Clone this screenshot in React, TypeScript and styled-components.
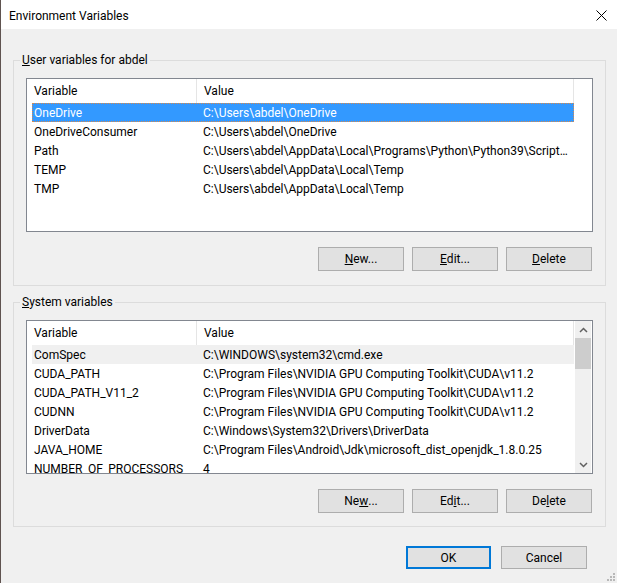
import styled, { createGlobalStyle } from "styled-components";

const GlobalStyle = createGlobalStyle`
  html, body {
    margin: 0;
    padding: 0;
    background: #f0f0f0;
  }
  body {
    font-family: Roboto, "Liberation Sans", Arial, sans-serif;
    font-size: 12px;
    color: #000;
  }
  * {
    box-sizing: border-box;
  }
`;

type Variable = { name: string; value: string };
type RowState = "none" | "focused" | "inactive";

const userVars: Variable[] = [
  { name: "OneDrive", value: "C:\\Users\\abdel\\OneDrive" },
  { name: "OneDriveConsumer", value: "C:\\Users\\abdel\\OneDrive" },
  {
    name: "Path",
    value:
      "C:\\Users\\abdel\\AppData\\Local\\Programs\\Python\\Python39\\Scripts\\;C:\\Users\\abdel\\AppData\\Local\\Programs\\Python\\Python39\\",
  },
  { name: "TEMP", value: "C:\\Users\\abdel\\AppData\\Local\\Temp" },
  { name: "TMP", value: "C:\\Users\\abdel\\AppData\\Local\\Temp" },
];

const systemVars: Variable[] = [
  { name: "ComSpec", value: "C:\\WINDOWS\\system32\\cmd.exe" },
  { name: "CUDA_PATH", value: "C:\\Program Files\\NVIDIA GPU Computing Toolkit\\CUDA\\v11.2" },
  { name: "CUDA_PATH_V11_2", value: "C:\\Program Files\\NVIDIA GPU Computing Toolkit\\CUDA\\v11.2" },
  { name: "CUDNN", value: "C:\\Program Files\\NVIDIA GPU Computing Toolkit\\CUDA\\v11.2" },
  { name: "DriverData", value: "C:\\Windows\\System32\\Drivers\\DriverData" },
  { name: "JAVA_HOME", value: "C:\\Program Files\\Android\\Jdk\\microsoft_dist_openjdk_1.8.0.25" },
  { name: "NUMBER_OF_PROCESSORS", value: "4" },
];

const VariableList = ({
  items,
  selected,
  state,
  scrollable,
}: {
  items: Variable[];
  selected: number;
  state: RowState;
  scrollable?: boolean;
}) => (
  <ListBox>
    <ListMain>
      <HeaderRow>
        <HeaderCell $width={170}>Variable</HeaderCell>
        <HeaderCell $width={377}>Value</HeaderCell>
      </HeaderRow>
      <Rows>
        {items.map((v, i) => (
          <Row key={v.name} $state={i === selected ? state : "none"}>
            <NameCell>{v.name}</NameCell>
            <ValueCell>{v.value}</ValueCell>
          </Row>
        ))}
      </Rows>
    </ListMain>
    {scrollable && (
      <ScrollBar>
        <ScrollArrow>
          <svg width="9" height="6" viewBox="0 0 9 6">
            <path d="M1 5 L4.5 1.5 L8 5" fill="none" stroke="#606060" strokeWidth="1.5" />
          </svg>
        </ScrollArrow>
        <Thumb />
        <Track />
        <ScrollArrow>
          <svg width="9" height="6" viewBox="0 0 9 6">
            <path d="M1 1 L4.5 4.5 L8 1" fill="none" stroke="#606060" strokeWidth="1.5" />
          </svg>
        </ScrollArrow>
      </ScrollBar>
    )}
  </ListBox>
);

const App = () => {
  return (
    <>
      <GlobalStyle />
      <Window>
        <TitleBar>
          <Title>Environment Variables</Title>
          <CloseButton>
            <svg width="11" height="11" viewBox="0 0 11 11">
              <path d="M0.5 0.5 L10.5 10.5 M10.5 0.5 L0.5 10.5" stroke="#000" strokeWidth="1" />
            </svg>
          </CloseButton>
        </TitleBar>
        <Body>
          <Group>
            <Legend>
              <Key>U</Key>ser variables for abdel
            </Legend>
            <GroupBody>
              <VariableList items={userVars} selected={0} state="focused" />
              <ButtonRow>
                <PushButton>
                  <Key>N</Key>ew...
                </PushButton>
                <PushButton>
                  <Key>E</Key>dit...
                </PushButton>
                <PushButton>
                  <Key>D</Key>elete
                </PushButton>
              </ButtonRow>
            </GroupBody>
          </Group>
          <Group $gap={8}>
            <Legend>
              <Key>S</Key>ystem variables
            </Legend>
            <GroupBody $bottom={13}>
              <VariableList items={systemVars} selected={0} state="inactive" scrollable />
              <ButtonRow>
                <PushButton>
                  Ne<Key>w</Key>...
                </PushButton>
                <PushButton>
                  Ed<Key>i</Key>t...
                </PushButton>
                <PushButton>
                  De<Key>l</Key>ete
                </PushButton>
              </ButtonRow>
            </GroupBody>
          </Group>
          <Footer>
            <PushButton $width={85} $height={23} $default>
              OK
            </PushButton>
            <PushButton $height={23}>Cancel</PushButton>
          </Footer>
        </Body>
        <Grip>
          <svg width="10" height="10" viewBox="0 0 10 10">
            <rect x="7" y="1" width="2" height="2" fill="#b8b8b8" />
            <rect x="4" y="4" width="2" height="2" fill="#b8b8b8" />
            <rect x="7" y="4" width="2" height="2" fill="#b8b8b8" />
            <rect x="1" y="7" width="2" height="2" fill="#b8b8b8" />
            <rect x="4" y="7" width="2" height="2" fill="#b8b8b8" />
            <rect x="7" y="7" width="2" height="2" fill="#b8b8b8" />
          </svg>
        </Grip>
      </Window>
    </>
  );
};

export default App;

const Window = styled.div`
  position: relative;
  width: 617px;
  height: 583px;
  background: #f0f0f0;
  border-left: 1px solid #5f5350;
  display: flex;
  flex-direction: column;
  overflow: hidden;
`;

const TitleBar = styled.div`
  height: 29px;
  flex-shrink: 0;
  background: #fff;
  display: flex;
  align-items: center;
  justify-content: space-between;
  padding-left: 8px;
`;

const Title = styled.span`
  font-size: 12px;
  line-height: 16px;
  padding-top: 2px;
`;

const CloseButton = styled.div`
  width: 32px;
  height: 29px;
  display: flex;
  align-items: center;
  justify-content: center;
  padding-top: 1px;
`;

const Body = styled.div`
  padding: 23px 11px 0 12px;
  display: flex;
  flex-direction: column;
`;

const Group = styled.fieldset<{ $gap?: number }>`
  margin: ${(p) => p.$gap ?? 0}px 0 0 0;
  padding: 0;
  min-width: 0;
  border: 1px solid #dcdcdc;
`;

const Legend = styled.legend`
  margin-left: 6px;
  padding: 1px 2px 0;
  font-size: 12px;
  line-height: 15px;
`;

const GroupBody = styled.div<{ $bottom?: number }>`
  padding: 10px 12px ${(p) => p.$bottom ?? 14}px 12px;
`;

const Key = styled.span`
  text-decoration: underline;
  text-underline-offset: 1px;
`;

const ListBox = styled.div`
  height: 154px;
  background: #fff;
  border: 1px solid #828790;
  display: flex;
  overflow: hidden;
`;

const ListMain = styled.div`
  width: 547px;
  flex-shrink: 0;
  display: flex;
  flex-direction: column;
`;

const HeaderRow = styled.div`
  display: flex;
  height: 24px;
  flex-shrink: 0;
`;

const HeaderCell = styled.div<{ $width: number }>`
  width: ${(p) => p.$width}px;
  padding: 1px 0 0 7px;
  line-height: 23px;
  border-right: 1px solid #e5e5e5;
`;

const Rows = styled.div`
  padding-left: 5px;
  display: flex;
  flex-direction: column;
`;

const Row = styled.div<{ $state: RowState }>`
  display: flex;
  width: 542px;
  height: 19px;
  line-height: 19px;
  padding-top: 1px;
  flex-shrink: 0;
  overflow: hidden;
  white-space: nowrap;
  background: ${(p) =>
    p.$state === "focused" ? "#3399ff" : p.$state === "inactive" ? "#f0f0f0" : "transparent"};
  color: ${(p) => (p.$state === "focused" ? "#fff" : "#000")};
  outline: ${(p) => (p.$state === "focused" ? "1px dotted #d9894a" : "none")};
  outline-offset: -1px;
`;

const NameCell = styled.div`
  width: 164px;
  flex-shrink: 0;
  padding-left: 2px;
  overflow: hidden;
`;

const ValueCell = styled.div`
  flex: 1;
  min-width: 0;
  padding: 0 5px 0 7px;
  overflow: hidden;
  text-overflow: ellipsis;
`;

const ScrollBar = styled.div`
  width: 18px;
  flex-shrink: 0;
  background: #f0f0f0;
  border-left: 1px solid #fff;
  border-right: 1px solid #fff;
  display: flex;
  flex-direction: column;
`;

const ScrollArrow = styled.div`
  height: 17px;
  flex-shrink: 0;
  display: flex;
  align-items: center;
  justify-content: center;
`;

const Thumb = styled.div`
  height: 31px;
  flex-shrink: 0;
  background: #cdcdcd;
`;

const Track = styled.div`
  flex: 1;
`;

const ButtonRow = styled.div`
  display: flex;
  justify-content: flex-end;
  gap: 8px;
  margin-top: 15px;
  padding-right: 1px;
`;

const PushButton = styled.button<{ $width?: number; $height?: number; $default?: boolean }>`
  width: ${(p) => p.$width ?? 86}px;
  height: ${(p) => p.$height ?? 24}px;
  padding: ${(p) => (p.$height === 23 ? "1px 0 0" : "0")};
  margin: 0;
  font-family: inherit;
  font-size: 12px;
  color: #000;
  background: #e1e1e1;
  border: ${(p) => (p.$default ? "2px solid #0078d7" : "1px solid #adadad")};
  display: flex;
  align-items: center;
  justify-content: center;
`;

const Footer = styled.div`
  display: flex;
  justify-content: flex-end;
  gap: 10px;
  margin-top: 19px;
  padding-right: 19px;
`;

const Grip = styled.div`
  position: absolute;
  right: 1px;
  bottom: 1px;
  width: 10px;
  height: 10px;
  display: flex;
`;
